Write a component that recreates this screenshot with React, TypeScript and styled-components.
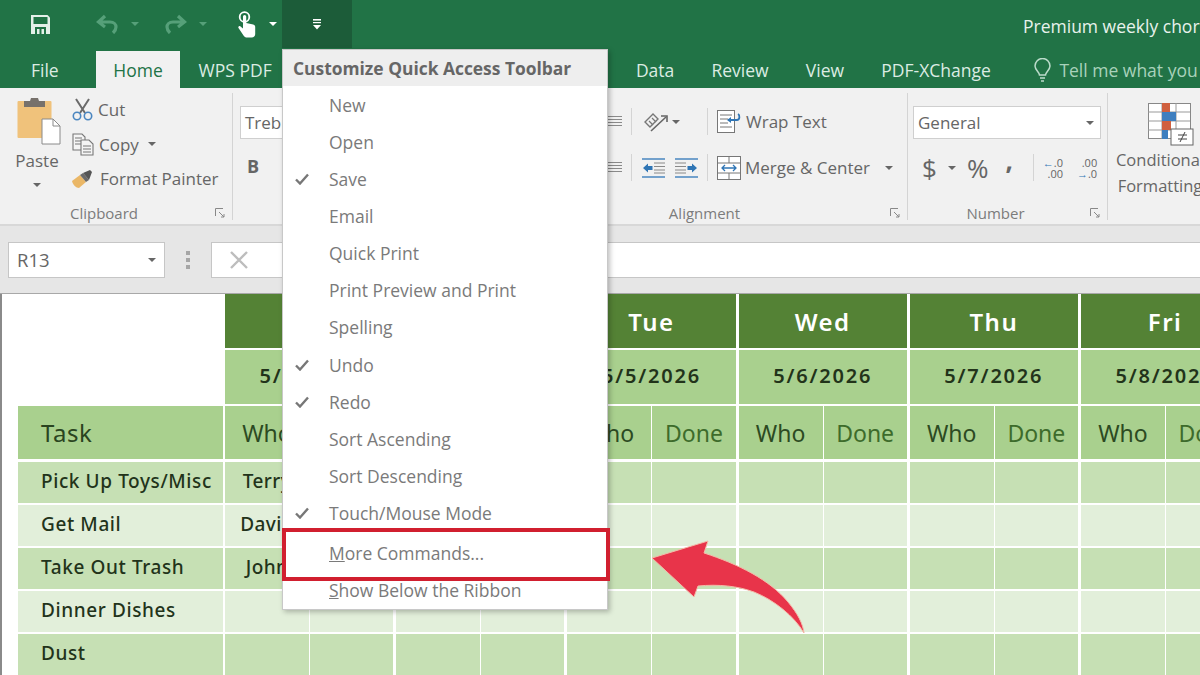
import { FC, ReactNode } from 'react';
import styled, { createGlobalStyle } from 'styled-components';

const GREEN = '#217346';
const UI_FONT = `'Open Sans', 'Noto Sans', sans-serif`;
const SHEET_FONT = `'Noto Sans', 'Open Sans', sans-serif`;

const GlobalStyle = createGlobalStyle`
  html, body {
    margin: 0;
    background: #fff;
  }
  * {
    box-sizing: border-box;
  }
`;

const SaveIcon = () => (
  <svg width="21" height="21" viewBox="0 0 21 21">
    <path d="M1 1h16.500L20 3.500V20H1z" fill="#e4f0e9" />
    <rect x="3.500" y="3" width="14" height="7" fill={GREEN} />
    <rect x="5" y="13" width="11" height="7" fill={GREEN} />
    <rect x="7" y="15" width="7" height="5" fill="#e4f0e9" />
    <rect x="9.500" y="15" width="2" height="5" fill={GREEN} />
  </svg>
);

const UndoIcon: FC<{ flip?: boolean }> = ({ flip }) => (
  <svg width="23" height="20" viewBox="0 0 23 20" style={flip ? { transform: 'scaleX(-1)' } : undefined}>
    <path d="M9 2 2.500 8 9 13M3 8h11c4 0 6 2.500 6 5s-1 4-3 6" fill="none" stroke="#56a079" strokeWidth="3.200" />
  </svg>
);

const TouchIcon = () => (
  <svg width="20" height="27" viewBox="0 0 20 27">
    <circle cx="7.500" cy="6" r="4.800" fill="none" stroke="#fff" strokeWidth="1.800" />
    <path d="M6 5.500a1.600 1.600 0 0 1 3.200 0V12l7 1.500c1.500.4 2 1.200 2 2.500v7c0 2-1.500 3.500-3.500 3.500H10c-1.500 0-2.500-.6-3.300-1.800L1.500 17c-.8-1.300.8-2.700 2-1.600L6 17.500z" fill="#fff" />
  </svg>
);

const CustomizeIcon = () => (
  <svg width="10" height="12" viewBox="0 0 10 12">
    <rect x="1" y="1" width="8" height="1.600" fill="#fff" />
    <rect x="1" y="4" width="8" height="1.200" fill="#fff" />
    <path d="M1 7h8l-4 4.500z" fill="#fff" />
  </svg>
);

const PasteIcon = () => (
  <svg width="44" height="48" viewBox="0 0 44 48">
    <rect x="0.500" y="3" width="34" height="37" rx="1" fill="#f0c27b" />
    <path d="M7 3h6l1-3h7l1 3h6v6H7z" fill="#77716b" />
    <path d="M25 21h11l7 7v18H25z" fill="#fff" stroke="#8a8a8a" />
    <path d="M36 21v7h7" fill="none" stroke="#8a8a8a" />
  </svg>
);

const CutIcon = () => (
  <svg width="21" height="23" viewBox="0 0 21 23">
    <path d="M4 1l9 14M17 1 8 15" stroke="#6a6a6a" strokeWidth="2" fill="none" />
    <circle cx="5" cy="18" r="3.700" fill="none" stroke="#4a86c0" strokeWidth="1.600" />
    <circle cx="16" cy="18" r="3.700" fill="none" stroke="#4a86c0" strokeWidth="1.600" />
  </svg>
);

const CopyIcon = () => (
  <svg width="22" height="23" viewBox="0 0 22 23" fill="none" stroke="#777" strokeWidth="1.100">
    <path d="M1 1h9l3 3v13H1z" fill="#f4f4f4" />
    <path d="M3 5h7M3 8h7M3 11h7" />
    <path d="M9 7h8l4 4v11H9z" fill="#f4f4f4" />
    <path d="M11 13h8M11 16h8M11 19h8" />
  </svg>
);

const BrushIcon = () => (
  <svg width="23" height="20" viewBox="0 0 23 20">
    <path d="M0 12 8 6l6 7-7 6c-3 0-6-3-7-7z" fill="#eab767" />
    <path d="M8 6l3-2 6 7-3 2z" fill="#6a6a6a" />
    <path d="M11 4l7-3 2 2-3 8z" fill="#555" />
  </svg>
);

const LinesIcon = () => (
  <svg width="14" height="13" viewBox="0 0 14 13" stroke="#8a8a8a" strokeWidth="1">
    <path d="M0 1.500h14M0 4.500h14M0 7.500h14M0 10.500h14" />
  </svg>
);

const OrientIcon = () => (
  <svg width="27" height="20" viewBox="0 0 27 20" fill="none">
    <path d="M3 10 11 2l5 5-8 8z" stroke="#777" strokeWidth="1.400" />
    <path d="M7 9l4 4M10 6l4 4" stroke="#777" strokeWidth="1.200" />
    <path d="M9 19 24 5" stroke="#666" strokeWidth="1.600" />
    <path d="M19 4h6v6" stroke="#666" strokeWidth="1.600" />
  </svg>
);

const IndentIcon: FC<{ flip?: boolean }> = ({ flip }) => (
  <svg width="23" height="20" viewBox="0 0 23 20" style={flip ? { transform: 'scaleX(-1)' } : undefined}>
    <path d="M0 1h23M0 19h23" stroke="#4a86c0" strokeWidth="1.400" />
    <path d="M12 5h11M12 8.500h11M12 12h11M12 15h11" stroke="#888" strokeWidth="1" />
    <path d="M1 10 6 5.500V8h4.500v4H6v2.500z" fill="#2f75b5" />
  </svg>
);

const WrapIcon = () => (
  <svg width="25" height="23" viewBox="0 0 25 23" fill="none">
    <rect x="0.500" y="0.500" width="17" height="22" stroke="#777" fill="#fff" />
    <path d="M3 5h12M3 9h8M3 13h8M3 17h12" stroke="#777" />
    <path d="M11 10h9c3 0 3-5 1-6" stroke="#2f75b5" strokeWidth="1.800" />
    <path d="M14 7l-4 3 4 3z" fill="#2f75b5" />
  </svg>
);

const MergeIcon = () => (
  <svg width="24" height="24" viewBox="0 0 24 24" fill="none">
    <rect x="0.500" y="0.500" width="23" height="23" stroke="#777" fill="#fff" />
    <path d="M0 7h24M0 17h24M12 0v7M12 17v7" stroke="#777" />
    <path d="M5 12h14M8 9l-3 3 3 3M16 9l3 3-3 3" stroke="#2f75b5" strokeWidth="1.300" />
  </svg>
);

const DecimalIcon: FC<{ more?: boolean }> = ({ more }) => (
  <DecimalBox>
    <span>
      {more && <DecimalArrow>{'\u2190'}</DecimalArrow>}
      {more ? '.0' : '.00'}
    </span>
    <span>
      {!more && <DecimalArrow>{'\u2192'}</DecimalArrow>}
      {more ? '.00' : '.0'}
    </span>
  </DecimalBox>
);

const ConditionalIcon = () => (
  <svg width="46" height="43" viewBox="0 0 46 43">
    <rect x="0.500" y="0.500" width="42" height="35" fill="#fff" stroke="#888" />
    <path d="M14 0v36M28 0v36M0 9h42M0 18h42M0 27h42" stroke="#999" />
    <rect x="14" y="0" width="8" height="9" fill="#d0603f" />
    <rect x="14" y="9" width="14" height="9" fill="#3f7fbf" />
    <rect x="14" y="18" width="9" height="9" fill="#d0603f" />
    <rect x="14" y="27" width="6" height="9" fill="#3f7fbf" />
    <rect x="23" y="26" width="22" height="16" fill="#fff" stroke="#666" />
    <path d="M30 32h9M30 36h9M37 29l-5 10" stroke="#444" fill="none" />
  </svg>
);

const CheckIcon = () => (
  <svg width="14" height="12" viewBox="0 0 14 12">
    <path d="M1 6.500 5 10.500 13 1.500" fill="none" stroke="#777" strokeWidth="2.400" />
  </svg>
);

const BulbIcon = () => (
  <svg width="17" height="25" viewBox="0 0 17 25" fill="none" stroke="#bcdccb" strokeWidth="1.500">
    <path d="M5.500 17c0-3-4.500-5-4.500-9a7.500 7.500 0 0 1 15 0c0 4-4.500 6-4.500 9z" />
    <path d="M6 20h5M7 23h3" />
  </svg>
);

const CurvedArrow = () => (
  <ArrowSvg width="156" height="96" viewBox="0 0 156 96">
    <path
      d="M2 18 58 1 54 13C88 24 120 40 138 62 148 74 153 84 154 93 144 76 124 60 104 52 88 46 68 44 48 46L44 57z"
      fill="#e8344a"
      stroke="#f4b9a8"
      strokeWidth="1"
    />
  </ArrowSvg>
);

const Launcher = () => (
  <LauncherIcon width="10" height="10" viewBox="0 0 10 10" fill="none" stroke="#888">
    <path d="M0.500 8V0.500H8" />
    <path d="M4 4l5 5M9 6v3H6" />
  </LauncherIcon>
);

const Group: FC<{ width: number; label?: string; children: ReactNode }> = ({ width, label, children }) => (
  <GroupBox $width={width}>
    <GroupBody>{children}</GroupBody>
    <GroupFooter>
      <GroupLabel>{label}</GroupLabel>
      {label && <Launcher />}
    </GroupFooter>
  </GroupBox>
);

const MENU_ITEMS: [string, boolean][] = [
  ['New', false],
  ['Open', false],
  ['Save', true],
  ['Email', false],
  ['Quick Print', false],
  ['Print Preview and Print', false],
  ['Spelling', false],
  ['Undo', true],
  ['Redo', true],
  ['Sort Ascending', false],
  ['Sort Descending', false],
  ['Touch/Mouse Mode', true],
];

const DAYS = [
  ['Sun', '5/3/2026'],
  ['Mon', '5/4/2026'],
  ['Tue', '5/5/2026'],
  ['Wed', '5/6/2026'],
  ['Thu', '5/7/2026'],
  ['Fri', '5/8/2026'],
];

const TASKS = [
  ['Pick Up Toys/Misc', 'Terry'],
  ['Get Mail', 'David'],
  ['Take Out Trash', 'John'],
  ['Dinner Dishes', ''],
  ['Dust', ''],
];

const App: FC = () => (
  <Page>
    <GlobalStyle />
    <TitleBar>
      <QatSlot $left={30}>
        <SaveIcon />
      </QatSlot>
      <QatSlot $left={45}>
        <UndoIcon />
      </QatSlot>
      <Caret $left={12} $color="#56a079" />
      <QatSlot $left={25}>
        <UndoIcon flip />
      </QatSlot>
      <Caret $left={12} $color="#56a079" />
      <QatSlot $left={30}>
        <TouchIcon />
      </QatSlot>
      <Caret $left={12} $color="#fff" />
      <CustomizeButton>
        <CustomizeIcon />
      </CustomizeButton>
      <DocTitle>Premium weekly chore schedule</DocTitle>
    </TitleBar>

    <TabBar>
      <FileTab>File</FileTab>
      <ActiveTab>Home</ActiveTab>
      <Tab>WPS PDF</Tab>
      <Tab $left={327}>Data</Tab>
      <Tab>Review</Tab>
      <Tab>View</Tab>
      <Tab>PDF-XChange</Tab>
      <TellMe>
        <BulbIcon />
        Tell me what you want to do
      </TellMe>
    </TabBar>

    <Ribbon>
      <Group width={233} label="Clipboard">
        <ClipboardBody>
          <PasteColumn>
            <PasteIcon />
            <RibbonText>Paste</RibbonText>
            <Caret $color="#666" />
          </PasteColumn>
          <SmallColumn>
            <SmallButton>
              <CutIcon />
              <RibbonText>Cut</RibbonText>
            </SmallButton>
            <SmallButton>
              <CopyIcon />
              <RibbonText>Copy</RibbonText>
              <Caret $left={4} $color="#666" />
            </SmallButton>
            <SmallButton>
              <BrushIcon />
              <RibbonText>Format Painter</RibbonText>
            </SmallButton>
          </SmallColumn>
        </ClipboardBody>
      </Group>

      <Group width={293}>
        <FontBody>
          <Field $width={100}>
            <RibbonText>Trebuchet MS</RibbonText>
          </Field>
          <BoldMark>B</BoldMark>
        </FontBody>
      </Group>

      <Group width={382} label="Alignment">
        <AlignBody>
          <AlignRow>
            <LinesIcon />
            <VerticalRule $left={9} />
            <OrientSlot>
              <OrientIcon />
              <Caret $left={3} $color="#666" />
            </OrientSlot>
            <VerticalRule />
            <WideAction>
              <WrapIcon />
              <RibbonText>Wrap Text</RibbonText>
            </WideAction>
          </AlignRow>
          <AlignRow>
            <LinesIcon />
            <VerticalRule $left={9} />
            <OrientSlot>
              <IndentIcon />
              <IndentGap />
              <IndentIcon flip />
            </OrientSlot>
            <VerticalRule />
            <WideAction>
              <MergeIcon />
              <RibbonText>Merge &amp; Center</RibbonText>
              <Caret $left={11} $color="#666" />
            </WideAction>
          </AlignRow>
        </AlignBody>
      </Group>

      <Group width={200} label="Number">
        <NumberBody>
          <Field $width={188}>
            <RibbonText>General</RibbonText>
            <Caret $color="#666" />
          </Field>
          <NumberRow>
            <Symbol>$</Symbol>
            <Caret $left={11} $color="#666" />
            <Symbol $left={11}>%</Symbol>
            <Symbol $left={17} $bold>
              ,
            </Symbol>
            <VerticalRule $left={20} />
            <DecimalSlot>
              <DecimalIcon more />
              <DecimalIcon />
            </DecimalSlot>
          </NumberRow>
        </NumberBody>
      </Group>

      <StylesColumn>
        <ConditionalIcon />
        <StylesText>
          Conditional
          <br />
          Formatting
        </StylesText>
      </StylesColumn>
    </Ribbon>

    <FormulaBar>
      <NameBox>
        R13
        <Caret $color="#666" />
      </NameBox>
      <Dots>
        <i />
        <i />
        <i />
      </Dots>
      <FormulaInput>
        <svg width="20" height="20" viewBox="0 0 20 20">
          <path d="M2 2l16 16M18 2 2 18" stroke="#bdbdbd" strokeWidth="2.400" />
        </svg>
      </FormulaInput>
    </FormulaBar>

    <Sheet>
      <Blank />
      {DAYS.map(([day]) => (
        <DayCell key={day}>{day}</DayCell>
      ))}
      {DAYS.map(([day, date]) => (
        <DateCell key={day}>{date}</DateCell>
      ))}
      <TaskHead>Task</TaskHead>
      {DAYS.map(([day]) => [
        <WhoHead key={`${day}-who`}>Who</WhoHead>,
        <DoneHead key={`${day}-done`}>Done</DoneHead>,
      ])}
      {TASKS.map(([task, who], row) => [
        <TaskCell key={task} $odd={row % 2 === 0}>
          {task}
        </TaskCell>,
        ...DAYS.map(([day], index) => [
          <EntryCell key={`${task}-${day}-who`} $odd={row % 2 === 0}>
            {index === 0 ? who : ''}
          </EntryCell>,
          <EntryCell key={`${task}-${day}-done`} $odd={row % 2 === 0} $wide />,
        ]),
      ])}
    </Sheet>

    <Menu>
      <MenuHeader>Customize Quick Access Toolbar</MenuHeader>
      {MENU_ITEMS.map(([name, checked]) => (
        <MenuItem key={name}>
          <MenuCheck>{checked && <CheckIcon />}</MenuCheck>
          {name}
        </MenuItem>
      ))}
      <MoreItem>
        <MenuCheck />
        <span>
          <u>M</u>ore Commands...
        </span>
      </MoreItem>
      <MenuItem>
        <MenuCheck />
        <span>
          <u>S</u>how Below the Ribbon
        </span>
      </MenuItem>
    </Menu>
    <Highlight />
    <CurvedArrow />
  </Page>
);

const Page = styled.div`
  position: relative;
  width: 1200px;
  height: 675px;
  overflow: hidden;
  font-family: ${UI_FONT};
  color: #666;
`;

const TitleBar = styled.header`
  display: flex;
  align-items: center;
  height: 48px;
  background: ${GREEN};
`;

const QatSlot = styled.div<{ $left: number }>`
  display: flex;
  flex: none;
  margin-left: ${(p) => p.$left}px;
`;

const Caret = styled.i<{ $left?: number; $color: string }>`
  flex: none;
  width: 0;
  height: 0;
  margin-left: ${(p) => p.$left ?? 0}px;
  border-left: 4px solid transparent;
  border-right: 4px solid transparent;
  border-top: 4px solid ${(p) => p.$color};
`;

const CustomizeButton = styled.div`
  display: flex;
  flex: none;
  align-items: center;
  justify-content: center;
  width: 70px;
  height: 48px;
  margin-left: 5px;
  background: #1c5c39;
`;

const DocTitle = styled.div`
  flex: none;
  margin: 3px 0 0 671px;
  color: #e8f2ec;
  font-size: 17.500px;
  white-space: nowrap;
`;

const TabBar = styled.nav`
  display: flex;
  align-items: stretch;
  height: 40px;
  background: ${GREEN};
  font-size: 17.500px;
  white-space: nowrap;
`;

const Tab = styled.div<{ $left?: number }>`
  display: flex;
  align-items: center;
  flex: none;
  padding: 4px 18.600px 0;
  margin-left: ${(p) => p.$left ?? 0}px;
  color: #dcece3;
`;

const FileTab = styled(Tab)`
  width: 96px;
  padding-left: 31px;
`;

const ActiveTab = styled(Tab)`
  justify-content: center;
  width: 84px;
  padding: 0;
  margin-top: 3px;
  background: #f1f1f1;
  color: ${GREEN};
`;

const TellMe = styled(Tab)`
  gap: 8px;
  padding-left: 25px;
  color: #a9d2bb;
`;

const Ribbon = styled.section`
  display: flex;
  height: 138px;
  background: #f1f1f1;
  border-bottom: 2px solid #d8d8d8;
  white-space: nowrap;
`;

const GroupBox = styled.div<{ $width: number }>`
  display: flex;
  flex: none;
  flex-direction: column;
  width: ${(p) => p.$width}px;
  margin: 5px 0 4px;
  border-right: 1px solid #d4d4d4;
`;

const GroupBody = styled.div`
  flex: 1;
  min-height: 0;
`;

const GroupFooter = styled.div`
  display: flex;
  align-items: center;
  height: 14px;
  padding-right: 7px;
`;

const GroupLabel = styled.span`
  flex: 1;
  padding-right: 7px;
  color: #7c7c7c;
  font-size: 15px;
  line-height: 14px;
  text-align: center;
`;

const LauncherIcon = styled.svg`
  flex: none;
`;

const RibbonText = styled.span`
  color: #666;
  font-size: 17px;
`;

const ClipboardBody = styled.div`
  display: flex;
  padding: 5px 0 0 15px;
`;

const PasteColumn = styled.div`
  display: flex;
  flex-direction: column;
  align-items: center;
  width: 44px;
  gap: 3px;

  svg {
    margin-left: 4px;
  }

  i {
    margin-top: 8px;
  }
`;

const SmallColumn = styled.div`
  display: flex;
  flex-direction: column;
  gap: 9.500px;
  margin: -1px 0 0 13px;
`;

const SmallButton = styled.div`
  display: flex;
  align-items: center;
  gap: 5px;
  height: 25px;
`;

const FontBody = styled.div`
  display: flex;
  flex-direction: column;
  align-items: flex-start;
  padding: 13px 0 0 7px;
`;

const Field = styled.div<{ $width: number }>`
  display: flex;
  flex: none;
  align-items: center;
  justify-content: space-between;
  width: ${(p) => p.$width}px;
  height: 33px;
  padding: 0 6px 0 4px;
  background: #fff;
  border: 1px solid #cfcfcf;
  overflow: hidden;
`;

const BoldMark = styled.b`
  margin: 15px 0 0 7px;
  font-size: 18px;
  color: #666;
`;

const AlignBody = styled.div`
  display: flex;
  flex-direction: column;
  gap: 19px;
  padding: 15px 0 0 82px;
`;

const AlignRow = styled.div`
  display: flex;
  align-items: center;
  height: 27px;
`;

const VerticalRule = styled.span<{ $left?: number }>`
  flex: none;
  width: 1px;
  height: 27px;
  margin-left: ${(p) => p.$left ?? 0}px;
  background: #d4d4d4;
`;

const OrientSlot = styled.div`
  display: flex;
  align-items: center;
  width: 75px;
  padding-left: 10px;
`;

const IndentGap = styled.span`
  width: 10px;
`;

const WideAction = styled.div`
  display: flex;
  align-items: center;
  gap: 4px;
  margin-left: 9px;
`;

const NumberBody = styled.div`
  display: flex;
  flex-direction: column;
  gap: 12px;
  padding: 13px 0 0 5px;
`;

const NumberRow = styled.div`
  display: flex;
  align-items: center;
  height: 33px;
  padding-left: 9px;
`;

const Symbol = styled.span<{ $left?: number; $bold?: boolean }>`
  margin-left: ${(p) => p.$left ?? 0}px;
  font-size: 26px;
  font-weight: ${(p) => (p.$bold ? 700 : 400)};
  color: #666;
  transform: translateY(${(p) => (p.$bold ? -8 : 0)}px);
`;

const DecimalSlot = styled.div`
  display: flex;
  gap: 14px;
  margin-left: 9px;
`;

const DecimalBox = styled.div`
  display: flex;
  flex-direction: column;
  align-items: flex-end;
  font-size: 11px;
  line-height: 11px;
  color: #666;
`;

const DecimalArrow = styled.b`
  color: #2f75b5;
`;

const StylesColumn = styled.div`
  display: flex;
  flex: none;
  flex-direction: column;
  align-items: center;
  width: 104px;
  padding-top: 15px;
  gap: 1px;

  svg {
    margin-left: 22px;
  }
`;

const StylesText = styled(RibbonText)`
  font-size: 16.500px;
  line-height: 26px;
  text-align: center;
`;

const FormulaBar = styled.section`
  display: flex;
  align-items: center;
  height: 68px;
  padding: 0 0 0 8px;
  background: #e6e6e6;
  border-bottom: 1px solid #a8a8a8;
`;

const NameBox = styled.div`
  display: flex;
  align-items: center;
  justify-content: space-between;
  width: 157px;
  height: 36px;
  padding: 0 8px;
  background: #fff;
  border: 1px solid #c6c6c6;
  font-size: 18.500px;
`;

const Dots = styled.div`
  display: flex;
  flex-direction: column;
  gap: 3px;
  margin: 0 21px;

  i {
    width: 4px;
    height: 4px;
    background: #a6a6a6;
  }
`;

const FormulaInput = styled.div`
  display: flex;
  align-items: center;
  flex: 1;
  height: 36px;
  padding-left: 17px;
  background: #fff;
  border: 1px solid #c6c6c6;
  border-right: 0;
`;

const Sheet = styled.section`
  display: grid;
  grid-template-columns: 207px repeat(6, 85px 86.200px);
  grid-template-rows: 56px 56px 56px;
  grid-auto-rows: 43px;
  width: 1300px;
  height: 381px;
  padding-left: 16px;
  background: #fff;
  border-left: 2px solid #8a8a8a;
  font-family: ${SHEET_FONT};
  overflow: hidden;
`;

const Blank = styled.div`
  grid-row: span 2;
`;

const BaseCell = styled.div`
  display: flex;
  align-items: center;
  justify-content: center;
  border-right: 1px solid #fff;
  border-bottom: 2px solid #fff;
  white-space: nowrap;
`;

const DayCell = styled(BaseCell)`
  grid-column: span 2;
  background: #548235;
  border-right-width: 3px;
  color: #fff;
  font-size: 24px;
  font-weight: 600;
  letter-spacing: 1.500px;
`;

const DateCell = styled(BaseCell)`
  grid-column: span 2;
  padding-bottom: 3px;
  background: #a9d08e;
  border-right-width: 3px;
  color: #22331a;
  font-size: 20px;
  font-weight: 600;
  letter-spacing: 1.800px;
`;

const TaskHead = styled(BaseCell)`
  justify-content: flex-start;
  padding-left: 23px;
  background: #a9d08e;
  border-right-width: 2px;
  border-bottom-width: 3px;
  color: #2a4420;
  font-size: 24px;
  letter-spacing: 0.500px;
`;

const WhoHead = styled(BaseCell)`
  background: #a9d08e;
  border-bottom-width: 3px;
  color: #2c4a22;
  font-size: 23px;
`;

const DoneHead = styled(WhoHead)`
  border-right-width: 3px;
  color: #3d6b2b;
`;

const TaskCell = styled(BaseCell)<{ $odd: boolean }>`
  justify-content: flex-start;
  padding: 0 0 4px 23px;
  background: ${(p) => (p.$odd ? '#c6e0b4' : '#e2efda')};
  border-right-width: 2px;
  color: #22331a;
  font-size: 19px;
  font-weight: 500;
  letter-spacing: 0.600px;
`;

const EntryCell = styled(BaseCell)<{ $odd: boolean; $wide?: boolean }>`
  padding-bottom: 4px;
  background: ${(p) => (p.$odd ? '#c6e0b4' : '#e2efda')};
  border-right-width: ${(p) => (p.$wide ? 3 : 1)}px;
  color: #22331a;
  font-size: 19px;
  font-weight: 500;
  letter-spacing: 0.400px;
`;

const Menu = styled.aside`
  position: absolute;
  top: 49px;
  left: 282px;
  width: 326px;
  height: 561px;
  background: #fff;
  border: 1px solid #c8c8c8;
  box-shadow: 2px 2px 5px rgba(0, 0, 0, 0.25);
  font-size: 17.500px;
  color: #7a7a7a;
`;

const MenuHeader = styled.div`
  display: flex;
  align-items: center;
  height: 36px;
  padding-left: 10px;
  background: #eeeeee;
  color: #666;
  font-size: 17.400px;
  font-weight: 700;
  white-space: nowrap;
`;

const MenuItem = styled.div`
  display: flex;
  align-items: center;
  height: 37.150px;
  white-space: nowrap;
`;

const MoreItem = styled(MenuItem)`
  margin-top: 3px;
`;

const MenuCheck = styled.span`
  display: flex;
  flex: none;
  width: 46px;
  padding-left: 12px;
`;

const Highlight = styled.div`
  position: absolute;
  top: 528px;
  left: 282px;
  width: 328px;
  height: 53px;
  border: 4px solid #d11f2f;
`;

const ArrowSvg = styled.svg`
  position: absolute;
  top: 540px;
  left: 650px;
`;

export default App;
